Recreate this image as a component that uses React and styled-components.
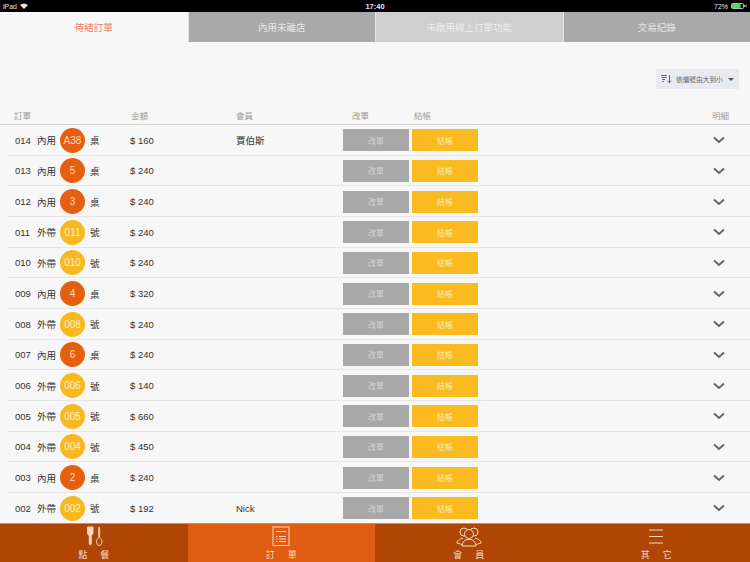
import React from 'react'
import styled, {createGlobalStyle} from 'styled-components'

const FONT = `"Liberation Sans", "Noto Sans CJK TC", sans-serif`

const Global = createGlobalStyle`
html, body { margin: 0; padding: 0; background: #f7f7f7; }
body { font-family: ${FONT}; }
`

const Page = styled.div`
width: 750px;
height: 562px;
display: flex;
flex-direction: column;
overflow: hidden;
background: #f7f7f7;
`

const StatusBar = styled.div`
height: 12px;
flex: none;
background: #000;
color: #e8e8e8;
font-size: 7px;
display: grid;
grid-template-columns: 1fr auto 1fr;
align-items: center;
padding: 0 3px;
`
const StatusSide = styled.div`
display: flex;
align-items: center;
gap: 3px;
justify-content: ${p => (p.$right ? 'flex-end' : 'flex-start')};
`
const Clock = styled.div`
font-size: 7.5px;
font-weight: 700;
`

const Tabs = styled.div`
height: 30px;
flex: none;
display: grid;
grid-template-columns: repeat(4, 1fr);
`
const Tab = styled.div`
display: flex;
align-items: center;
justify-content: center;
font-size: 9.5px;
padding-bottom: 1px;
box-sizing: border-box;
border-left: ${p => (p.$active ? 'none' : '1px solid #e4e4e4')};
color: ${p => (p.$active ? '#f0775f' : p.$dim ? '#ececec' : '#e6e6e6')};
background: ${p => (p.$active ? '#f7f7f7' : p.$dim ? '#cfcfcf' : '#a9a9a9')};
`

const SortBar = styled.div`
height: 47px;
flex: none;
display: flex;
justify-content: flex-end;
align-items: flex-end;
padding: 0 11px 0 0;
`
const SortButton = styled.div`
width: 83px;
height: 20px;
box-sizing: border-box;
padding: 0 5px;
background: #e9e9f0;
color: #666;
font-size: 6.7px;
display: flex;
align-items: center;
`
const SortIcon = styled.svg`
width: 11px;
height: 10px;
flex: none;
`
const SortLabel = styled.span`
flex: 1;
margin-left: 4px;
white-space: nowrap;
`
const Caret = styled.span`
width: 0;
height: 0;
border-left: 3px solid transparent;
border-right: 3px solid transparent;
border-top: 3.5px solid #555;
`

const HeaderRow = styled.div`
height: 36px;
flex: none;
box-sizing: border-box;
display: grid;
grid-template-columns: 117px 105px 116px 62px 298px auto;
padding: 20px 0 0 14px;
font-size: 8.5px;
line-height: 14px;
color: #9c9c9c;
border-bottom: 1px solid #cfcfcf;
`

const List = styled.div`
flex: 1;
min-height: 0;
overflow: hidden;
`
const Row = styled.div`
height: 30.67px;
box-sizing: border-box;
margin-left: 8px;
padding: 1px 0 0 7px;
display: flex;
align-items: center;
border-bottom: 1px solid #e6e6e6;
color: #333;
font-size: 9.5px;
`
const OrderNo = styled.span`
width: 22px;
`
const OrderType = styled.span`
width: 23px;
`
const Badge = styled.span`
width: 25px;
height: 25px;
flex: none;
border-radius: 50%;
display: flex;
align-items: center;
justify-content: center;
font-size: 10px;
color: ${p => (p.$table ? '#fbdcc8' : '#fdf0c8')};
background: ${p => (p.$table ? '#e65f0e' : '#f8b81f')};
`
const Unit = styled.span`
width: 45px;
padding-left: 5px;
box-sizing: border-box;
`
const Amount = styled.span`
width: 106px;
`
const Member = styled.span`
width: 107px;
`
const ActionButton = styled.div`
width: 66px;
height: 22px;
margin-right: 3px;
display: flex;
align-items: center;
justify-content: center;
font-size: 8px;
color: ${p => (p.$pay ? '#fbe9b5' : '#d2d2d2')};
background: ${p => (p.$pay ? '#f9bb1f' : '#a8a8a8')};
`
const Chevron = styled.svg`
width: 12px;
height: 8px;
margin-left: 232px;
`

const Nav = styled.div`
height: 39px;
flex: none;
box-sizing: border-box;
border-top: 1px solid #cf8a5c;
display: grid;
grid-template-columns: repeat(4, 1fr);
background: #b04605;
`
const NavItem = styled.div`
display: flex;
flex-direction: column;
align-items: center;
padding-top: 2px;
color: #f6d9c3;
background: ${p => (p.$active ? '#e05c10' : 'transparent')};
`
const NavIcon = styled.svg`
width: 26px;
height: 21px;
fill: none;
stroke: #f6d9c3;
stroke-width: 1;
`
const NavLabel = styled.div`
font-size: 9px;
line-height: 12px;
margin-top: 2px;
word-spacing: 10.5px;
`

const orders = [
  ['014', '內用', 'A38', '$ 160', '賈伯斯'],
  ['013', '內用', '5', '$ 240'],
  ['012', '內用', '3', '$ 240'],
  ['011', '外帶', '011', '$ 240'],
  ['010', '外帶', '010', '$ 240'],
  ['009', '內用', '4', '$ 320'],
  ['008', '外帶', '008', '$ 240'],
  ['007', '內用', '6', '$ 240'],
  ['006', '外帶', '006', '$ 140'],
  ['005', '外帶', '005', '$ 660'],
  ['004', '外帶', '004', '$ 450'],
  ['003', '內用', '2', '$ 240'],
  ['002', '外帶', '002', '$ 192', 'Nick'],
]

const App = () => {
  return (
    <Page>
      <Global />
      <StatusBar>
        <StatusSide>
          <span>iPad</span>
          <svg width="8" height="6" viewBox="0 0 8 6">
            <path d="M0 2 Q4 -1 8 2 L4 6 Z" fill="#e8e8e8" />
          </svg>
        </StatusSide>
        <Clock>17:40</Clock>
        <StatusSide $right>
          <span>72%</span>
          <svg width="16" height="6" viewBox="0 0 16 6">
            <rect x="0.5" y="0.5" width="12" height="5" rx="1" fill="none" stroke="#bbb" />
            <rect x="1" y="1" width="8.5" height="4" fill="#4cd964" />
            <rect x="13" y="2" width="1" height="2" fill="#bbb" />
            <path d="M15.5 0.5 L14.2 3.2 H15.2 L14.6 5.5 L16 2.6 H15 Z" fill="#e8e8e8" />
          </svg>
        </StatusSide>
      </StatusBar>

      <Tabs>
        <Tab $active>待結訂單</Tab>
        <Tab>內用未離店</Tab>
        <Tab $dim>未啟用線上訂單功能</Tab>
        <Tab>交易紀錄</Tab>
      </Tabs>

      <SortBar>
        <SortButton>
          <SortIcon viewBox="0 0 11 10">
            <path d="M0 1.5H6M0.5 3.5H5.5M1 5.5H4M1.5 7.5H3" stroke="#666" fill="none" />
            <path d="M8.5 1V8.5M6.7 6.8L8.5 8.8L10.3 6.8" stroke="#666" fill="none" />
          </SortIcon>
          <SortLabel>依編號由大到小</SortLabel>
          <Caret />
        </SortButton>
      </SortBar>

      <HeaderRow>
        <div>訂單</div>
        <div>金額</div>
        <div>會員</div>
        <div>改單</div>
        <div>結帳</div>
        <div>明細</div>
      </HeaderRow>

      <List>
        {orders.map(([no, type, badge, amount, member]) => {
          const dineIn = type === '內用'
          return (
            <Row key={no}>
              <OrderNo>{no}</OrderNo>
              <OrderType>{type}</OrderType>
              <Badge $table={dineIn}>{badge}</Badge>
              <Unit>{dineIn ? '桌' : '號'}</Unit>
              <Amount>{amount}</Amount>
              <Member>{member}</Member>
              <ActionButton>改單</ActionButton>
              <ActionButton $pay>結帳</ActionButton>
              <Chevron viewBox="0 0 12 8">
                <path d="M1 1.5L6 6L11 1.5" fill="none" stroke="#666" strokeWidth="2" />
              </Chevron>
            </Row>
          )
        })}
      </List>

      <Nav>
        <NavItem>
          <NavIcon viewBox="0 0 26 21">
            <path d="M6.5 1H12V7C12 8.5 10.2 9 10.2 10.5V17.5C10.2 19.3 8.3 19.3 8.3 17.5V10.5C8.3 9 6.5 8.5 6.5 7Z" fill="#f6d9c3" />
            <path d="M18.2 1C19 3 18.7 9 18.5 11.5C20 12.5 21 14 21 15.5C21 18 19.5 19.5 18.2 19.5C16.9 19.5 15.5 18 15.5 15.5C15.5 14 16.4 12.5 17.9 11.5C17.7 9 17.4 3 18.2 1Z" />
          </NavIcon>
          <NavLabel>點 餐</NavLabel>
        </NavItem>
        <NavItem $active>
          <NavIcon viewBox="0 0 26 21">
            <rect x="5" y="1" width="16" height="18.5" />
            <path d="M8 5.5H18M8 10.5H9.5M11 10.5H18M8 13H9.5M11 13H18M8 15.5H9.5M11 15.5H18" />
          </NavIcon>
          <NavLabel>訂 單</NavLabel>
        </NavItem>
        <NavItem>
          <NavIcon viewBox="0 0 26 21">
            <circle cx="8" cy="6" r="4" />
            <circle cx="18" cy="6" r="4" />
            <path d="M7 12C3 13 1 15 1 17L6 18.5M19 12C23 13 25 15 25 17L20 18.5" />
            <circle cx="13" cy="8" r="4.5" fill="#b04605" />
            <path d="M6 20C6 16 9 14 11 13.5H15C17 14 20 16 20 20Z" fill="#b04605" />
          </NavIcon>
          <NavLabel>會 員</NavLabel>
        </NavItem>
        <NavItem>
          <NavIcon viewBox="0 0 26 21">
            <path d="M6 4H20M6 10.5H20M6 17H20" />
          </NavIcon>
          <NavLabel>其 它</NavLabel>
        </NavItem>
      </Nav>
    </Page>
  )
}

export default App
